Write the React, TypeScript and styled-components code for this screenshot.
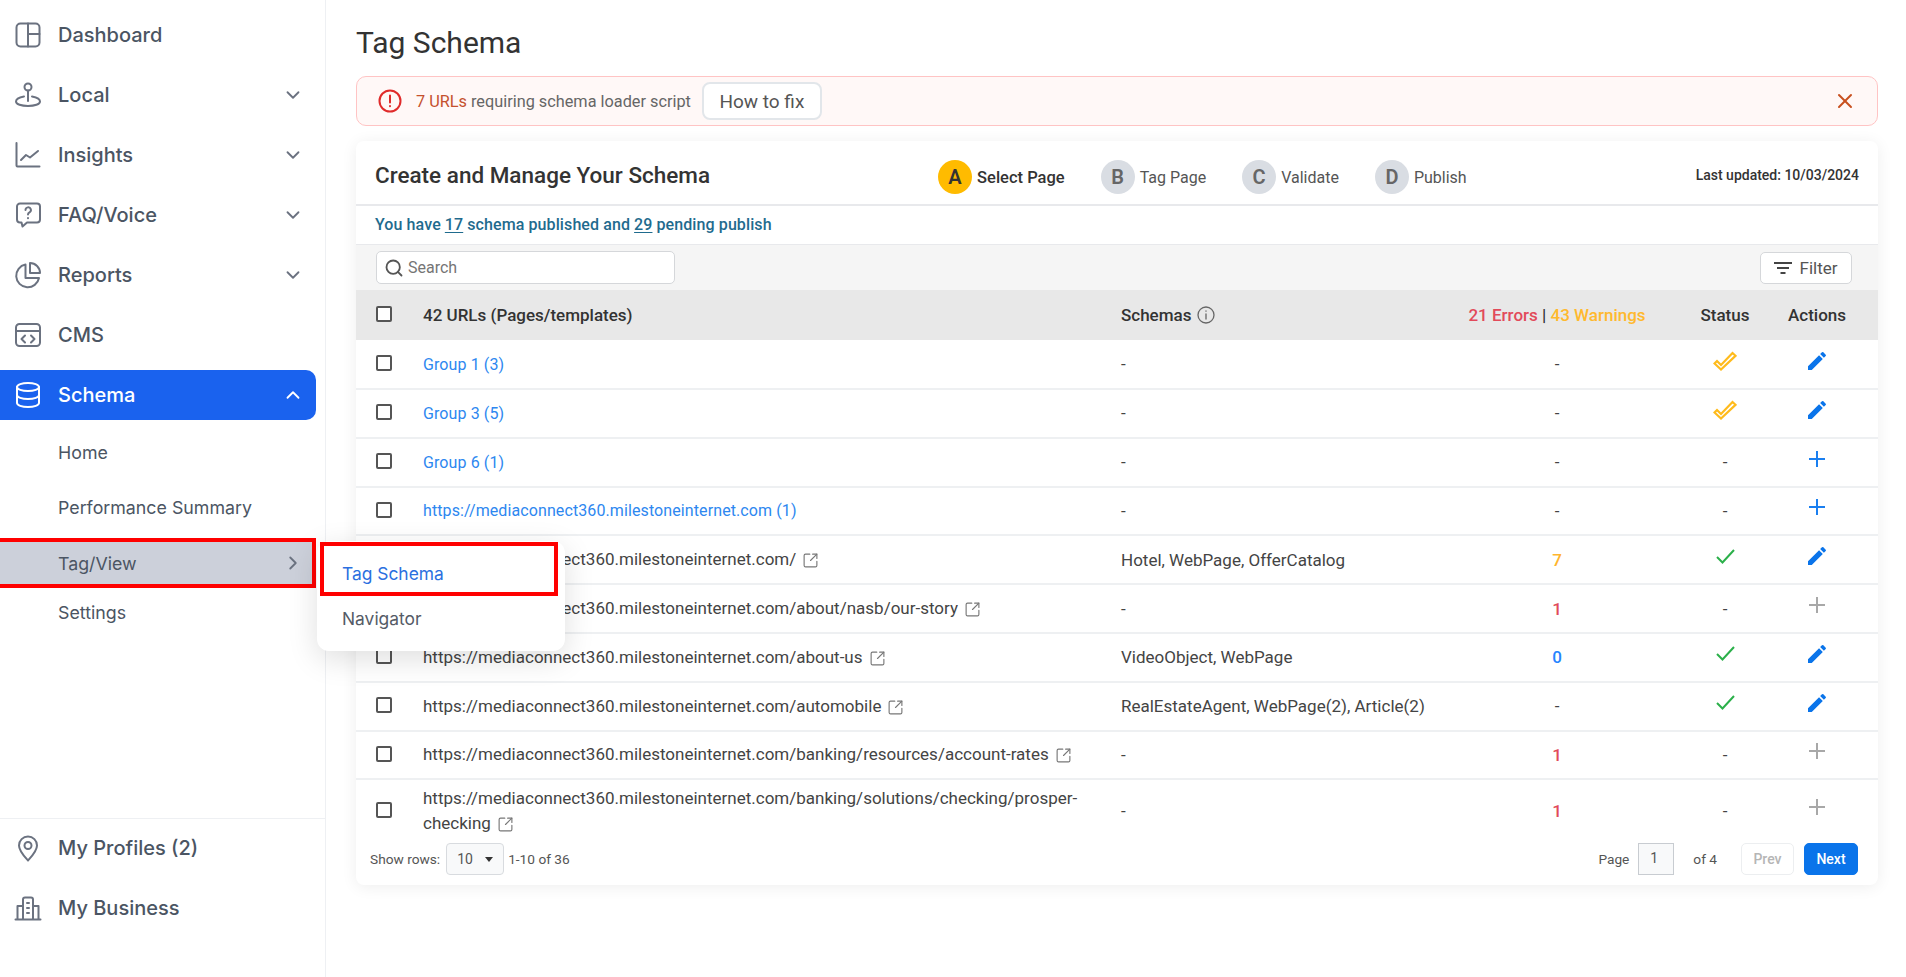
import React from "react";
import styled, { createGlobalStyle } from "styled-components";
import { ChevronDown, ChevronRight, ChevronUp, Search, SquareArrowOutUpRight, X } from "lucide-react";

const GlobalStyle = createGlobalStyle`
  html, body {
    margin: 0;
    padding: 0;
    background: #fff;
    font-family: "Roboto", sans-serif;
  }
  * { box-sizing: border-box; }
`;

const Page = styled.div`
  display: flex;
  width: 1906px;
  height: 977px;
  overflow: hidden;
`;

/* sidebar */
const Sidebar = styled.aside`
  width: 326px;
  flex: none;
  display: flex;
  flex-direction: column;
  padding-top: 10px;
  border-right: 1px solid #eef0f3;
  font-family: "Inter", sans-serif;
  position: relative;
  z-index: 2;
`;

const NavList = styled.nav`
  display: flex;
  flex-direction: column;
  gap: 10px;
  width: 316px;
`;

const NavItem = styled.div<{ $active?: boolean }>`
  height: 50px;
  display: flex;
  align-items: center;
  gap: 16px;
  padding: 0 12px 0 14px;
  border-radius: 0 10px 10px 0;
  font-size: 20px;
  font-weight: 500;
  color: ${(p) => (p.$active ? "#fff" : "#4b5563")};
  background: ${(p) => (p.$active ? "#1a62ee" : "transparent")};
  svg {
    flex: none;
    color: ${(p) => (p.$active ? "#fff" : "#6b7280")};
  }
`;

const NavLabel = styled.span`
  flex: 1;
`;

const SubList = styled.div`
  display: flex;
  flex-direction: column;
  gap: 5px;
  margin-top: 7px;
  width: 316px;
`;

const SubItem = styled.div<{ $open?: boolean; $tight?: boolean }>`
  height: 50px;
  display: flex;
  align-items: center;
  justify-content: space-between;
  padding: ${(p) => (p.$open ? "0 8px 0 58px" : "0 12px 0 58px")};
  margin-top: ${(p) => (p.$tight ? "-6px" : p.$open ? "1px" : "0")};
  font-size: 17.800px;
  color: #4b5563;
  position: relative;
  background: ${(p) => (p.$open ? "#ccd0da" : "transparent")};
  border: ${(p) => (p.$open ? "4px solid #f00" : "none")};
  border-left: none;
  svg { color: #6b7280; }
`;

const Flyout = styled.div`
  position: absolute;
  left: 317px;
  top: -1px;
  width: 248px;
  height: 110px;
  padding: 1px 7px 0 3px;
  background: #fff;
  border-radius: 12px;
  box-shadow: 0 8px 30px rgba(0, 0, 0, 0.13);
`;

const FlyoutItem = styled.div<{ $selected?: boolean }>`
  height: ${(p) => (p.$selected ? "54px" : "44px")};
  display: flex;
  align-items: center;
  padding-left: ${(p) => (p.$selected ? "18px" : "22px")};
  padding-top: ${(p) => (p.$selected ? "9px" : "0")};
  border: ${(p) => (p.$selected ? "4px solid #f00" : "none")};
  color: ${(p) => (p.$selected ? "#2b6fe0" : "#555b66")};
  font-size: 17.400px;
`;

const NavFooter = styled.div`
  margin-top: auto;
  padding: 4px 0 44px;
  border-top: 1px solid #eef0f3;
  display: flex;
  flex-direction: column;
  gap: 10px;
`;

/* main column */
const Main = styled.main`
  flex: 1;
  padding: 0 28px 0 30px;
  min-width: 0;
`;

const Title = styled.h1`
  margin: 0;
  height: 76px;
  display: flex;
  align-items: center;
  padding-top: 8px;
  font-size: 30px;
  font-weight: 400;
  color: #333;
`;

const Alert = styled.div`
  height: 50px;
  display: flex;
  align-items: center;
  padding: 0 20px 0 21px;
  background: #fff8f7;
  border: 1.5px solid #ffc4c4;
  border-radius: 10px;
  font-size: 16.300px;
  color: #666;
  svg { flex: none; }
`;

const AlertText = styled.span`
  margin-left: 14px;
  b { font-weight: 400; color: #c5512e; }
`;

const FixButton = styled.button`
  height: 38px;
  width: 120px;
  margin-left: 11px;
  background: #fff;
  border: 2px solid #e2e6ea;
  border-radius: 8px;
  font: 400 19px "Roboto", sans-serif;
  color: #555;
`;

const CloseIcon = styled(X)`
  margin-left: auto;
`;

const Card = styled.section`
  margin-top: 15px;
  background: #fff;
  border-radius: 8px;
  box-shadow: 0 2px 16px rgba(0, 0, 0, 0.07);
`;

const CardHead = styled.div`
  height: 65px;
  display: flex;
  align-items: center;
  padding: 5px 19px 0;
  border-bottom: 2px solid #e8e9ec;
`;

const CardTitle = styled.h2`
  margin: 0;
  font-size: 22.500px;
  font-weight: 500;
  color: #333;
`;

const Steps = styled.div`
  display: flex;
  gap: 36px;
  margin-left: 228px;
  margin-top: 4px;
`;

const Step = styled.div<{ $current?: boolean }>`
  display: flex;
  align-items: center;
  gap: 5px;
  font-size: ${(p) => (p.$current ? "16.500px" : "16px")};
  font-weight: ${(p) => (p.$current ? 500 : 400)};
  color: ${(p) => (p.$current ? "#333" : "#555")};
`;

const StepBadge = styled.span<{ $current?: boolean }>`
  width: 34px;
  height: 34px;
  display: flex;
  align-items: center;
  justify-content: center;
  border-radius: 50%;
  font-size: 20px;
  font-weight: 600;
  color: ${(p) => (p.$current ? "#333" : "#666")};
  background: ${(p) => (p.$current ? "#ffbb00" : "#d9dde3")};
`;

const Updated = styled.span`
  margin-left: auto;
  font-size: 14px;
  font-weight: 500;
  color: #333;
`;

const Summary = styled.div`
  height: 38px;
  display: flex;
  align-items: center;
  gap: 4px;
  padding: 0 0 2px 19px;
  font-size: 16px;
  font-weight: 500;
  letter-spacing: 0.1px;
  color: #1f6b8e;
  u { text-underline-offset: 2px; }
`;

const Toolbar = styled.div`
  height: 46px;
  display: flex;
  align-items: center;
  justify-content: space-between;
  padding: 0 26px 0 20px;
  background: #f5f5f5;
  border-top: 1px solid #e8e9ec;
`;

const SearchBox = styled.label`
  width: 299px;
  height: 33px;
  display: flex;
  align-items: center;
  gap: 2px;
  padding-left: 7px;
  background: #fff;
  border: 1px solid #d5d7da;
  border-radius: 5px;
  color: #555;
`;

const SearchInput = styled.input`
  flex: 1;
  min-width: 0;
  border: none;
  outline: none;
  background: transparent;
  font: 400 16px "Roboto", sans-serif;
  &::placeholder { color: #757575; opacity: 1; }
`;

const FilterButton = styled.button`
  width: 92px;
  height: 32px;
  display: flex;
  align-items: center;
  justify-content: center;
  gap: 7px;
  background: #fff;
  border: 1px solid #d5d7da;
  border-radius: 5px;
  font: 400 17px "Roboto", sans-serif;
  color: #555;
`;

const Row = styled.div<{ $head?: boolean; $first?: boolean; $last?: boolean }>`
  display: grid;
  grid-template-columns: 67px 698px 309px 254px 82px 102px;
  align-items: center;
  min-height: ${(p) => (p.$head || p.$first ? "50px" : p.$last ? "58px" : "48.800px")};
  padding-top: ${(p) => (p.$last ? "3px" : "0")};
  font-size: 17px;
  font-weight: ${(p) => (p.$head ? 500 : 400)};
  color: ${(p) => (p.$head ? "#333" : "#444")};
  background: ${(p) => (p.$head ? "#e8e8e8" : "transparent")};
  border-bottom: ${(p) => (p.$head || p.$last ? "none" : "2px solid #eef0f2")};
`;

const Box = styled.span`
  display: block;
  width: 16px;
  height: 16px;
  margin: -2px 0 0 20px;
  border: 2px solid #555;
  border-radius: 2px;
  background: #fff;
`;

const UrlCell = styled.div<{ $link?: boolean }>`
  padding-right: 30px;
  line-height: 25px;
  font-size: ${(p) => (p.$link ? "16px" : "inherit")};
  letter-spacing: ${(p) => (p.$link ? "0.1px" : "0")};
  color: ${(p) => (p.$link ? "#2d87f0" : "inherit")};
  svg {
    margin-left: 6px;
    vertical-align: -4px;
    color: #777;
  }
`;

const SchemaHead = styled.div`
  display: flex;
  align-items: center;
  gap: 6px;
`;

const Center = styled.div<{ $tone?: string }>`
  display: flex;
  justify-content: center;
  font-weight: ${(p) => (p.$tone ? 500 : "inherit")};
  color: ${(p) => p.$tone ?? "inherit"};
  svg { margin-top: -7px; }
`;

const Errors = styled.span`
  color: #e24a5a;
`;

const Warnings = styled.span`
  color: #ffb92e;
`;

const Footer = styled.div`
  height: 47px;
  display: flex;
  align-items: flex-start;
  padding: 5px 20px 0 14px;
  font-size: 14px;
  color: #555;
`;

const FooterText = styled.span`
  line-height: 32px;
  font-size: 13.700px;
`;

const RowsSelect = styled.div`
  width: 58px;
  height: 32px;
  display: flex;
  align-items: center;
  justify-content: space-between;
  margin: 0 4px 0 6px;
  padding: 0 10px;
  background: #f8f9fa;
  border: 1px solid #d8dbdf;
  border-radius: 4px;
  font-size: 14px;
  &::after {
    content: "";
    border: 4px solid transparent;
    border-top: 5px solid #333;
    border-bottom: none;
  }
`;

const Pager = styled.div`
  margin-left: auto;
  display: flex;
  align-items: flex-start;
`;

const PageInput = styled.div`
  width: 36px;
  height: 32px;
  margin: 0 19px 0 9px;
  padding-left: 11px;
  line-height: 28px;
  background: #f8f9fa;
  border: 1px solid #c8ccd1;
`;

const PageButton = styled.button<{ $primary?: boolean }>`
  width: ${(p) => (p.$primary ? "54px" : "53px")};
  height: 32px;
  margin-left: ${(p) => (p.$primary ? "10px" : "24px")};
  padding: 0;
  border-radius: 5px;
  font: 500 14px "Roboto", sans-serif;
  color: ${(p) => (p.$primary ? "#fff" : "#b5b5b5")};
  background: ${(p) => (p.$primary ? "#0a74ea" : "#fff")};
  border: 1px solid ${(p) => (p.$primary ? "#0a74ea" : "#eceef0")};
`;

/* drawings */
const Stroke = ({ children, size = 28 }: { children: React.ReactNode; size?: number }) => (
  <svg width={size} height={size} viewBox="0 0 28 28" fill="none" stroke="currentColor" strokeWidth="2" strokeLinecap="round" strokeLinejoin="round">
    {children}
  </svg>
);

const DashboardIcon = () => (
  <Stroke>
    <rect x="2.5" y="2.5" width="23" height="23" rx="4" />
    <path d="M14 2.5v23M14 13h11.5" />
  </Stroke>
);
const LocalIcon = () => (
  <Stroke>
    <circle cx="14" cy="6" r="3.5" />
    <path d="M14 9.5V20" />
    <path d="M10 15.5c-4.5.8-8 2.6-8 5 0 2.800 5.400 4.500 12 4.500s12-1.700 12-4.500c0-2.400-3.500-4.200-8-5" />
  </Stroke>
);
const InsightsIcon = () => (
  <Stroke>
    <path d="M2.500 2v22.500a1 1 0 0 0 1 1h22" />
    <path d="M7 19l5-5 4 2.500 8-6.500" />
  </Stroke>
);
const FaqIcon = () => (
  <Stroke>
    <path d="M6 2.500h17a3 3 0 0 1 3 3v13a3 3 0 0 1-3 3H13l-4.500 4-1-4H6a3 3 0 0 1-3-3v-13a3 3 0 0 1 3-3z" />
    <path d="M11.500 9a2.700 2.700 0 1 1 4 2.400c-1 .6-1.500 1.100-1.500 2.100M14 17v.2" />
  </Stroke>
);
const ReportsIcon = () => (
  <Stroke>
    <path d="M11.500 3.500a11.500 11.500 0 1 0 13.500 13.500H11.500z" />
    <path d="M16 2v10h10A10 10 0 0 0 16 2z" />
  </Stroke>
);
const CmsIcon = () => (
  <Stroke>
    <rect x="2" y="3" width="24" height="22" rx="3.500" />
    <path d="M2 10h24M11 14.500L7.500 18l3.500 3.500M17 14.500l3.500 3.500-3.500 3.500" />
  </Stroke>
);
const DatabaseIcon = () => (
  <Stroke>
    <ellipse cx="14" cy="6" rx="11" ry="4" />
    <path d="M3 6v16c0 2.200 4.900 4 11 4s11-1.800 11-4V6M3 14c0 2.200 4.900 4 11 4s11-1.800 11-4" />
  </Stroke>
);
const PinIcon = () => (
  <Stroke>
    <path d="M14 26.500c-3.500-4-9-9.500-9-15a9 9 0 0 1 18 0c0 5.500-5.500 11-9 15z" />
    <circle cx="14" cy="11.500" r="3.500" />
  </Stroke>
);
const BusinessIcon = () => (
  <Stroke>
    <path d="M1.500 25.500h25M9 25.500V5.500a2 2 0 0 1 2-2h6a2 2 0 0 1 2 2v20M9 12H3.500v13.500M19 12h5.500v13.500" />
    <path d="M13 9h2M13 14h2M13 19h2" />
  </Stroke>
);
const AlertIcon = () => (
  <svg width="24" height="24" viewBox="0 0 24 24" fill="none" stroke="#e02b2b" strokeWidth="2" strokeLinecap="round">
    <circle cx="12" cy="12" r="10.500" />
    <path d="M12 6.500v7M12 17v.3" />
  </svg>
);
const FilterIcon = () => (
  <svg width="18" height="14" viewBox="0 0 18 14" stroke="#444" strokeWidth="2">
    <path d="M0 2h18M3 7h12M6.500 12h5" />
  </svg>
);
const InfoIcon = () => (
  <svg width="18" height="18" viewBox="0 0 18 18" fill="none" stroke="#666" strokeWidth="1.300" strokeLinecap="round">
    <circle cx="9" cy="9" r="8" />
    <path d="M9 8v5M9 5v.2" />
  </svg>
);
const PartialCheck = () => (
  <svg width="24" height="20" viewBox="0 0 24 20" fill="none" stroke="#ffbb1c" strokeWidth="2.200" strokeLinejoin="miter">
    <path d="M1.500 12.500L4 10l4 4L19.500 2l3 2.800L8 18.500z" />
  </svg>
);
const DoneCheck = () => (
  <svg width="19" height="15" viewBox="0 0 19 15" fill="none" stroke="#2bb04a" strokeWidth="2">
    <path d="M1 8l5.500 5.500L18 1" />
  </svg>
);
const EditIcon = () => (
  <svg width="24" height="24" viewBox="0 0 24 24" fill="#0a74ea">
    <path d="M3 17.250V21h3.750L17.810 9.940l-3.750-3.750L3 17.250zM20.710 7.040c.39-.39.39-1.020 0-1.410l-2.340-2.340a.996.996 0 0 0-1.410 0l-1.830 1.830 3.750 3.750 1.830-1.830z" />
  </svg>
);
const PlusIcon = ({ muted }: { muted?: boolean }) => (
  <svg width="16" height="16" viewBox="0 0 16 16" stroke={muted ? "#a8a8a8" : "#1a7ff0"} strokeWidth="2">
    <path d="M8 0v16M0 8h16" />
  </svg>
);

type RowData = {
  url: string;
  link?: boolean;
  external?: boolean;
  schemas: string;
  count: string;
  tone?: string;
  status: "partial" | "done" | "none";
  action: "edit" | "add" | "muted";
};

const base = "https://mediaconnect360.milestoneinternet.com";
const rows: RowData[] = [
  { url: "Group 1 (3)", link: true, schemas: "-", count: "-", status: "partial", action: "edit" },
  { url: "Group 3 (5)", link: true, schemas: "-", count: "-", status: "partial", action: "edit" },
  { url: "Group 6 (1)", link: true, schemas: "-", count: "-", status: "none", action: "add" },
  { url: `${base} (1)`, link: true, schemas: "-", count: "-", status: "none", action: "add" },
  { url: `${base}/`, external: true, schemas: "Hotel, WebPage, OfferCatalog", count: "7", tone: "#ffb52e", status: "done", action: "edit" },
  { url: `${base}/about/nasb/our-story`, external: true, schemas: "-", count: "1", tone: "#e24a5a", status: "none", action: "muted" },
  { url: `${base}/about-us`, external: true, schemas: "VideoObject, WebPage", count: "0", tone: "#2684ff", status: "done", action: "edit" },
  { url: `${base}/automobile`, external: true, schemas: "RealEstateAgent, WebPage(2), Article(2)", count: "-", status: "done", action: "edit" },
  { url: `${base}/banking/resources/account-rates`, external: true, schemas: "-", count: "1", tone: "#e24a5a", status: "none", action: "muted" },
  { url: `${base}/banking/solutions/checking/prosper-checking`, external: true, schemas: "-", count: "1", tone: "#e24a5a", status: "none", action: "muted" },
];

const steps = [
  { key: "A", label: "Select Page", current: true },
  { key: "B", label: "Tag Page" },
  { key: "C", label: "Validate" },
  { key: "D", label: "Publish" },
];

const App = () => {
  return (
    <Page>
      <GlobalStyle />
      <Sidebar>
        <NavList>
          <NavItem><DashboardIcon /><NavLabel>Dashboard</NavLabel></NavItem>
          <NavItem><LocalIcon /><NavLabel>Local</NavLabel><ChevronDown size={22} /></NavItem>
          <NavItem><InsightsIcon /><NavLabel>Insights</NavLabel><ChevronDown size={22} /></NavItem>
          <NavItem><FaqIcon /><NavLabel>FAQ/Voice</NavLabel><ChevronDown size={22} /></NavItem>
          <NavItem><ReportsIcon /><NavLabel>Reports</NavLabel><ChevronDown size={22} /></NavItem>
          <NavItem><CmsIcon /><NavLabel>CMS</NavLabel></NavItem>
          <NavItem $active><DatabaseIcon /><NavLabel>Schema</NavLabel><ChevronUp size={22} /></NavItem>
        </NavList>
        <SubList>
          <SubItem>Home</SubItem>
          <SubItem>Performance Summary</SubItem>
          <SubItem $open>
            Tag/View
            <ChevronRight size={22} />
            <Flyout>
              <FlyoutItem $selected>Tag Schema</FlyoutItem>
              <FlyoutItem>Navigator</FlyoutItem>
            </Flyout>
          </SubItem>
          <SubItem $tight>Settings</SubItem>
        </SubList>
        <NavFooter>
          <NavItem><PinIcon /><NavLabel>My Profiles (2)</NavLabel></NavItem>
          <NavItem><BusinessIcon /><NavLabel>My Business</NavLabel></NavItem>
        </NavFooter>
      </Sidebar>

      <Main>
        <Title>Tag Schema</Title>
        <Alert>
          <AlertIcon />
          <AlertText><b>7 URLs</b> requiring schema loader script</AlertText>
          <FixButton>How to fix</FixButton>
          <CloseIcon size={24} color="#c8501e" />
        </Alert>

        <Card>
          <CardHead>
            <CardTitle>Create and Manage Your Schema</CardTitle>
            <Steps>
              {steps.map((s) => (
                <Step key={s.key} $current={s.current}>
                  <StepBadge $current={s.current}>{s.key}</StepBadge>
                  {s.label}
                </Step>
              ))}
            </Steps>
            <Updated>Last updated: 10/03/2024</Updated>
          </CardHead>
          <Summary>
            You have <u>17</u> schema published and <u>29</u> pending publish
          </Summary>
          <Toolbar>
            <SearchBox>
              <Search size={20} strokeWidth={2.2} />
              <SearchInput placeholder="Search" />
            </SearchBox>
            <FilterButton><FilterIcon />Filter</FilterButton>
          </Toolbar>

          <Row $head>
            <Box />
            <div>42 URLs (Pages/templates)</div>
            <SchemaHead>Schemas <InfoIcon /></SchemaHead>
            <Center>
              <span><Errors>21 Errors</Errors> | <Warnings>43 Warnings</Warnings></span>
            </Center>
            <Center>Status</Center>
            <Center>Actions</Center>
          </Row>

          {rows.map((r, i) => (
            <Row key={r.url} $first={i === 0} $last={i === rows.length - 1}>
              <Box />
              <UrlCell $link={r.link}>
                {r.url}
                {r.external && <SquareArrowOutUpRight size={17} strokeWidth={1.6} />}
              </UrlCell>
              <div>{r.schemas}</div>
              <Center $tone={r.tone}>{r.count}</Center>
              <Center>
                {r.status === "partial" && <PartialCheck />}
                {r.status === "done" && <DoneCheck />}
                {r.status === "none" && "-"}
              </Center>
              <Center>
                {r.action === "edit" && <EditIcon />}
                {r.action === "add" && <PlusIcon />}
                {r.action === "muted" && <PlusIcon muted />}
              </Center>
            </Row>
          ))}

          <Footer>
            <FooterText>Show rows:</FooterText>
            <RowsSelect>10</RowsSelect>
            <FooterText>1-10 of 36</FooterText>
            <Pager>
              <FooterText>Page</FooterText>
              <PageInput>1</PageInput>
              <FooterText>of 4</FooterText>
              <PageButton>Prev</PageButton>
              <PageButton $primary>Next</PageButton>
            </Pager>
          </Footer>
        </Card>
      </Main>
    </Page>
  );
};

export default App;
